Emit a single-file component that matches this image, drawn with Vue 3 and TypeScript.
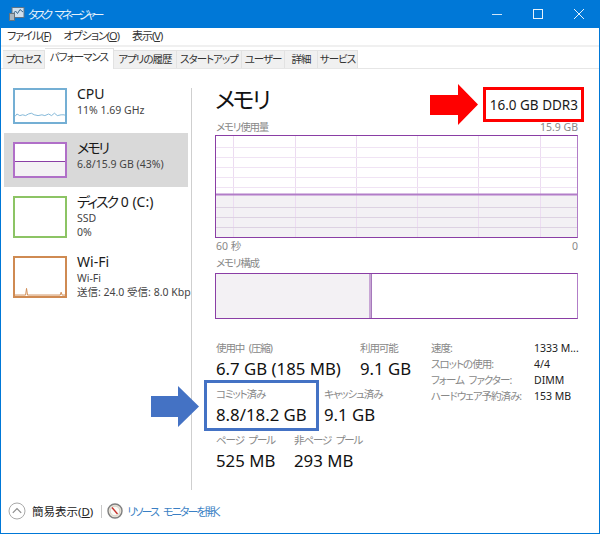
<script setup lang="ts">
interface Resource {
  kana: string
  rest: string
  lines: string[]
  color: string
  tall: boolean
  active?: boolean
  fill?: boolean
  spark?: string
}

const menus = [
  { label: 'ファイル(', key: 'F' },
  { label: 'オプション(', key: 'O' },
  { label: '表示(', key: 'V' },
]

const tabs = [
  { label: 'プロセス', width: 42 },
  { label: 'パフォーマンス', width: 69, active: true },
  { label: 'アプリの履歴', width: 63 },
  { label: 'スタートアップ', width: 65 },
  { label: 'ユーザー', width: 43 },
  { label: '詳細', width: 33 },
  { label: 'サービス', width: 40 },
]

const resources: Resource[] = [
  {
    kana: '',
    rest: 'CPU',
    lines: ['11%  1.69 GHz'],
    color: '#74afd4',
    tall: false,
    spark: '0,33 2,30 5,32 8,31 11,32 14,30 17,29 20,31 24,32 28,31 31,32 35,30 38,32 41,29 44,32 48,31 51,31 53,32',
  },
  { kana: 'メモリ', rest: '', lines: ['6.8/15.9 GB (43%)'], color: '#b06fc8', tall: false, active: true, fill: true },
  { kana: 'ディスク', rest: ' 0 (C:)', lines: ['SSD', '0%'], color: '#8cc464', tall: true },
  {
    kana: '',
    rest: 'Wi-Fi',
    lines: ['Wi-Fi', '送信: 24.0 受信: 8.0 Kbp'],
    color: '#cf8a52',
    tall: true,
    spark: '0,39 11,39 12,32 13,39 47,39 48,36 49,39 53,39',
  },
]

const vLines = [17, 79, 140, 201, 262, 324]
const hLines = [11, 21, 31, 41, 51, 71, 81, 91]

const stats = [
  { label: '速度:', value: '1333 M...' },
  { label: 'スロットの使用:', value: '4/4' },
  { label: 'フォーム ファクター:', value: 'DIMM' },
  { label: 'ハードウェア予約済み:', value: '153 MB' },
]
</script>

<template>
  <div class="window">
    <header class="titlebar">
      <svg class="app-icon" width="16" height="16" viewBox="0 0 16 16">
        <rect x="3" y="1.5" width="12" height="10" fill="#cfe0ee" stroke="#5d7488" />
        <path d="M4 8 L6.5 5 L8.5 7.5 L11 3.5 L14 6" fill="none" stroke="#38678d" />
        <rect x="0.5" y="7.5" width="5" height="7" fill="#a9b6c0" stroke="#67747e" />
      </svg>
      <span class="title">タスク マネージャー</span>
      <div class="controls">
        <svg width="12" height="12" viewBox="0 0 12 12"><path d="M1 6.5 H11" stroke="#cfe4f7" /></svg>
        <svg width="12" height="12" viewBox="0 0 12 12"><rect x="1.5" y="1.5" width="9" height="9" fill="none" stroke="#e6f2fb" /></svg>
        <svg width="12" height="12" viewBox="0 0 12 12"><path d="M1 1 L11 11 M11 1 L1 11" stroke="#e6f2fb" /></svg>
      </div>
    </header>

    <nav class="menu">
      <span v-for="m in menus" :key="m.key">{{ m.label }}<u>{{ m.key }}</u>)</span>
    </nav>

    <div class="tabs">
      <div
        v-for="t in tabs"
        :key="t.label"
        class="tab"
        :class="{ active: t.active }"
        :style="{ width: t.width + 'px' }"
      >{{ t.label }}</div>
    </div>

    <div class="body">
      <aside class="sidebar">
        <div
          v-for="r in resources"
          :key="r.kana + r.rest"
          class="resource"
          :class="{ active: r.active, tall: r.tall }"
        >
          <div class="thumb" :style="{ borderColor: r.color }">
            <div v-if="r.fill" class="thumb-fill"></div>
            <svg v-if="r.spark" class="thumb-spark" width="52" height="40" viewBox="0 0 52 40" preserveAspectRatio="none">
              <polyline :points="r.spark" fill="none" :stroke="r.color" />
            </svg>
          </div>
          <div class="resource-text">
            <div class="resource-name"><span class="kana">{{ r.kana }}</span>{{ r.rest }}</div>
            <div v-for="l in r.lines" :key="l" class="resource-line">{{ l }}</div>
          </div>
        </div>
      </aside>

      <main class="detail">
        <div class="head">
          <h1>メモリ</h1>
          <div class="spec">16.0 GB DDR3</div>
        </div>

        <div class="caption top">
          <span class="tight">メモリ使用量</span>
          <span>15.9 GB</span>
        </div>
        <div class="graph">
          <svg width="361" height="101" viewBox="0 0 361 101">
            <rect x="0" y="59" width="361" height="42" fill="#f3f1f4" />
            <line v-for="x in vLines" :key="'v' + x" :x1="x + 0.5" y1="0" :x2="x + 0.5" y2="101" stroke="#ecdcf1" />
            <line v-for="y in hLines" :key="'h' + y" x1="0" :y1="y + 0.5" x2="361" :y2="y + 0.5" :stroke="y > 59 ? '#ddd2e2' : '#f0e3f4'" />
            <line x1="0" y1="58.5" x2="361" y2="58.5" stroke="#b27dc8" stroke-width="2" />
          </svg>
        </div>
        <div class="caption axis">
          <span>60 秒</span>
          <span>0</span>
        </div>

        <div class="caption comp-label"><span class="tight">メモリ構成</span></div>
        <div class="composition">
          <div class="comp-used"></div>
        </div>

        <div class="stats">
          <div class="figures">
            <div class="fig-row">
              <div class="fig w144"><label>使用中 (圧縮)</label><b>6.7 GB (185 MB)</b></div>
              <div class="fig"><label>利用可能</label><b>9.1 GB</b></div>
            </div>
            <div class="fig-row">
              <div class="fig w108"><label>コミット済み</label><b>8.8/18.2 GB</b></div>
              <div class="fig"><label>キャッシュ済み</label><b>9.1 GB</b></div>
            </div>
            <div class="fig-row">
              <div class="fig w78"><label>ページ プール</label><b>525 MB</b></div>
              <div class="fig"><label>非ページ プール</label><b>293 MB</b></div>
            </div>
          </div>
          <dl class="facts">
            <template v-for="s in stats" :key="s.label">
              <dt>{{ s.label }}</dt>
              <dd>{{ s.value }}</dd>
            </template>
          </dl>
        </div>
      </main>
    </div>

    <footer class="footer">
      <svg width="18" height="18" viewBox="0 0 18 18">
        <circle cx="9" cy="9" r="8" fill="#fff" stroke="#a9a9a9" />
        <path d="M4.8 10.8 L9 6.6 L13.2 10.8" fill="none" stroke="#8d8d8d" stroke-width="1.2" />
      </svg>
      <span class="fewer">簡易表示(<u>D</u>)</span>
      <span class="sep"></span>
      <svg width="16" height="16" viewBox="0 0 16 16">
        <circle cx="8" cy="8" r="7" fill="#e9e4da" stroke="#7f7f7f" stroke-width="1.4" />
        <circle cx="8" cy="8" r="4.8" fill="#fbfaf6" stroke="#c4bfb4" stroke-width="0.6" />
        <path d="M5 4.5 L10.5 11" stroke="#c8322c" stroke-width="1.4" />
      </svg>
      <span class="link">リソース モニターを開く</span>
    </footer>

    <!-- annotations drawn on top of the screenshot -->
    <svg class="arrow red" width="48" height="41" viewBox="0 0 48 41">
      <path d="M0 11 H28 V0 L48 20.5 L28 41 V31 H0 Z" fill="#ff0000" />
    </svg>
    <div class="mark red-box"></div>
    <svg class="arrow blue" width="48" height="41" viewBox="0 0 48 41">
      <path d="M0 10 H27 V0 L48 20.5 L27 41 V31 H0 Z" fill="#4472c4" />
    </svg>
    <div class="mark blue-box"></div>
  </div>
</template>

<style>
html,
body {
  margin: 0;
  background: #fff;
}
</style>

<style scoped>
.window {
  position: relative;
  width: 600px;
  height: 534px;
  box-sizing: border-box;
  display: flex;
  flex-direction: column;
  overflow: hidden;
  background: #fff;
  border: 1px solid #0078d7;
  border-top: 0;
  font-family: "Noto Sans", "Noto Sans CJK JP", sans-serif;
  font-feature-settings: "palt";
  color: #1a1a1a;
}

.titlebar {
  flex: 0 0 28px;
  display: flex;
  align-items: center;
  margin: 0 -1px;
  padding-left: 9px;
  background: #0078d7;
  color: #e8f2fb;
  font-size: 11.5px;
}

.title {
  margin-left: 3px;
  letter-spacing: -2.8px;
  word-spacing: 4px;
}

.controls {
  margin-left: auto;
  display: flex;
  gap: 29px;
  padding-right: 15px;
}

.menu {
  flex: 0 0 16px;
  display: flex;
  gap: 13px;
  padding-left: 6px;
  font-size: 11px;
  line-height: 16px;
  letter-spacing: -1px;
  color: #333;
}

.tabs {
  flex: 0 0 24px;
  display: flex;
  align-items: flex-end;
  box-sizing: border-box;
  margin-top: 1px;
  padding-left: 2px;
  border-top: 2px solid #f0f0f0;
  border-bottom: 1px solid #e6e6e6;
}

.tab {
  height: 18px;
  box-sizing: border-box;
  background: #f0f0f0;
  border: 1px solid #e2e2e2;
  border-left: 0;
  border-bottom: 0;
  font-size: 10.5px;
  line-height: 16px;
  letter-spacing: -1px;
  text-align: center;
  white-space: nowrap;
  color: #333;
}

.tab.active {
  height: 21px;
  margin-bottom: -1px;
  background: #fff;
  line-height: 16px;
}

.body {
  flex: 1;
  display: flex;
  padding-top: 19px;
  min-height: 0;
}

.sidebar {
  flex: 0 0 191px;
  box-sizing: border-box;
  height: 402px;
  padding-left: 3px;
  border-right: 1px solid #cfcfcf;
}

.resource {
  display: flex;
  width: 184px;
  height: 54px;
  padding: 9px 0 0 9px;
  box-sizing: border-box;
}

.resource.tall {
  height: 60px;
}

.resource:first-child {
  padding-top: 0;
  height: 45px;
}

.resource.active {
  background: #d9d9d9;
}

.thumb {
  position: relative;
  width: 54px;
  height: 36px;
  box-sizing: border-box;
  border: 2px solid;
  background: #fff;
  flex: none;
}

.tall .thumb {
  height: 42px;
}

.thumb-fill {
  position: absolute;
  left: 0;
  right: 0;
  bottom: 0;
  height: 14px;
  background: #f3f1f4;
  border-top: 1px solid #8a3ea5;
}

.thumb-spark {
  position: absolute;
  inset: 0;
  width: 100%;
  height: 100%;
}

.resource-text {
  margin-left: 10px;
  margin-top: -3px;
  white-space: nowrap;
}

.resource-name {
  font-size: 14px;
  line-height: 18px;
}

.kana {
  letter-spacing: -2px;
}

.resource-line {
  font-size: 10.5px;
  line-height: 14px;
  color: #444;
}

.detail {
  flex: 1;
  padding-left: 23px;
  min-width: 0;
}

.head {
  display: flex;
  justify-content: space-between;
  height: 34px;
  margin-top: -6px;
  padding-right: 21px;
}

h1 {
  margin: 0;
  font-size: 23px;
  font-weight: 400;
  line-height: 34px;
  letter-spacing: -2.4px;
  color: #111;
}

.spec {
  margin-top: 13px;
  font-size: 13.5px;
  line-height: 20px;
}

.caption {
  display: flex;
  justify-content: space-between;
  width: 362px;
  padding-left: 1px;
  font-size: 10.5px;
  line-height: 14px;
  color: #888;
}

.tight {
  letter-spacing: -1.2px;
}

.top {
  margin-top: 4px;
}

.graph {
  width: 363px;
  height: 103px;
  box-sizing: border-box;
  margin-top: 1px;
  border: 1px solid #8a3ea5;
  border-right-color: #b27dc8;
}

.graph svg {
  display: block;
}

.axis {
  margin-top: 1px;
}

.comp-label {
  margin-top: 3px;
}

.composition {
  width: 363px;
  height: 46px;
  box-sizing: border-box;
  margin-top: 3px;
  border: 1px solid #8a3ea5;
  border-right-color: #b27dc8;
  display: flex;
}

.comp-used {
  width: 153px;
  background: #f3f1f4;
  border-right: 2px solid #c8a6d5;
  box-shadow: 1px 0 0 #a679bb;
}

.stats {
  display: flex;
  margin-top: 22px;
}

.figures {
  width: 215px;
  padding-left: 1px;
}

.fig-row {
  display: flex;
  height: 46px;
}

.fig {
  display: flex;
  flex-direction: column;
  white-space: nowrap;
}

.w144 {
  width: 144px;
}

.w108 {
  width: 108px;
}

.w78 {
  width: 78px;
}

.fig label {
  font-size: 10.5px;
  line-height: 15px;
  letter-spacing: -1.1px;
  word-spacing: 3px;
  color: #888;
}

.fig b {
  margin-top: 2px;
  font-size: 16.8px;
  font-weight: 400;
  line-height: 22px;
  color: #111;
}

.facts {
  margin: -1px 0 0;
  display: grid;
  grid-template-columns: 103px auto;
  grid-auto-rows: 16px;
  font-size: 10.5px;
  line-height: 16px;
  white-space: nowrap;
}

.facts dt {
  letter-spacing: -1px;
  word-spacing: 3px;
  color: #888;
}

.facts dd {
  margin: 0;
  color: #222;
}

.footer {
  flex: 0 0 42px;
  display: flex;
  align-items: center;
  padding-left: 7px;
  margin-bottom: 1px;
  font-size: 11.5px;
}

.fewer {
  margin-left: 6px;
  color: #222;
}

.sep {
  width: 1px;
  height: 13px;
  margin: 0 5px 0 8px;
  background: #c8c8c8;
}

.link {
  margin-left: 4px;
  color: #3a7fc4;
  font-size: 11px;
  letter-spacing: -1.9px;
  word-spacing: 4px;
}

.arrow {
  position: absolute;
}

.arrow.red {
  left: 429px;
  top: 84px;
}

.arrow.blue {
  left: 150px;
  top: 386px;
}

.mark {
  position: absolute;
  box-sizing: border-box;
  pointer-events: none;
}

.red-box {
  left: 482px;
  top: 87px;
  width: 101px;
  height: 35px;
  border: 3px solid #ff0000;
}

.blue-box {
  left: 203px;
  top: 380px;
  width: 115px;
  height: 51px;
  border: 3px solid #4472c4;
}
</style>
